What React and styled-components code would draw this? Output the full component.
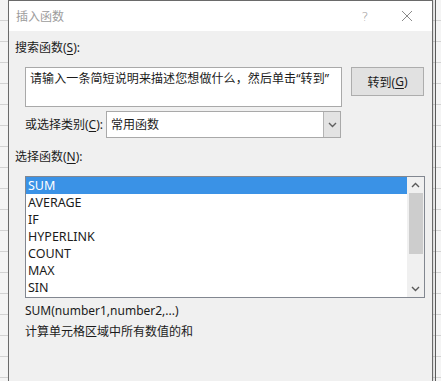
import React from 'react';
import styled, { createGlobalStyle } from 'styled-components';

const GlobalStyle = createGlobalStyle`
  html, body { margin: 0; padding: 0; }
  body {
    width: 441px;
    height: 381px;
    overflow: hidden;
    font-family: "Noto Sans", "Noto Sans CJK SC", sans-serif;
    background-color: #f4f4f4;
    background-image:
      linear-gradient(to right, transparent 435px, #5c5c5c 435px, #5c5c5c 436px, transparent 436px),
      repeating-linear-gradient(to bottom, transparent 0, transparent 20px, #d2d2d2 20px, #d2d2d2 21px);
  }
`;

const Dialog = styled.div`
  margin-left: 8px;
  width: 425px;
  height: 381px;
  box-sizing: border-box;
  border: 1px solid #6a6a6a;
  border-bottom: none;
  background: #f0f0f0;
  display: flex;
  flex-direction: column;
  box-shadow: 1px 0 2px rgba(0, 0, 0, 0.15);
  color: #1b1b1b;
  font-size: 12px;
`;

const TitleBar = styled.div`
  height: 30px;
  flex: none;
  background: #fff;
  display: flex;
  align-items: center;
  padding: 0 2px 0 7px;
`;

const Title = styled.div`
  flex: 1;
  color: #9c9c9c;
  font-size: 12px;
`;

const TitleButton = styled.div`
  width: ${p => p.$w}px;
  height: 30px;
  display: flex;
  align-items: center;
  justify-content: center;
  color: #9a9a9a;
  font-size: 13px;
  font-family: "DejaVu Sans", sans-serif;
  font-weight: 200;
  margin-left: ${p => p.$gap || 0}px;
`;

const Body = styled.div`
  padding: 9px 0 0 6px;
  display: flex;
  flex-direction: column;
`;

const Label = styled.div`
  line-height: 16px;
  height: 16px;
  margin-top: ${p => p.$top || 0}px;
  width: ${p => (p.$w ? `${p.$w}px` : 'auto')};
  flex: none;
  white-space: nowrap;
`;

const Key = styled.span`
  text-decoration: underline;
  text-underline-offset: 2px;
`;

const Indent = styled.div`
  padding-left: 10px;
  display: flex;
  flex-direction: column;
`;

const SearchRow = styled.div`
  display: flex;
  gap: 9px;
  margin-top: 11px;
  align-items: flex-start;
`;

const SearchBox = styled.div`
  width: 317px;
  height: 40px;
  box-sizing: border-box;
  background: #fff;
  border: 1px solid #a9a9a9;
  padding: 3px 4px;
  line-height: 16px;
  white-space: nowrap;
  letter-spacing: 0.1px;
`;

const Button = styled.div`
  width: 73px;
  height: 29px;
  box-sizing: border-box;
  background: #e1e1e1;
  border: 1px solid #adadad;
  display: flex;
  align-items: center;
  justify-content: center;
`;

const ComboRow = styled.div`
  display: flex;
  align-items: center;
  margin-top: 4px;
  height: 27px;
`;

const Combo = styled.div`
  width: 235px;
  height: 27px;
  box-sizing: border-box;
  background: #fff;
  border: 1px solid #a9a9a9;
  display: flex;
`;

const ComboText = styled.div`
  flex: 1;
  padding-left: 4px;
  line-height: 25px;
`;

const ComboArrow = styled.div`
  width: 16px;
  background: #e3e3e3;
  border-left: 1px solid #b4b4b4;
  display: flex;
  align-items: center;
  justify-content: center;
`;

const ListBox = styled.div`
  margin-top: 11px;
  width: 400px;
  height: 122px;
  box-sizing: border-box;
  border: 1px solid #828790;
  background: #fff;
  display: flex;
`;

const Items = styled.div`
  flex: 1;
  display: flex;
  flex-direction: column;
`;

const Item = styled.div`
  height: 17px;
  line-height: 17px;
  padding-left: 2px;
  font-size: 12.5px;
  background: ${p => (p.$selected ? '#3a92e6' : 'transparent')};
  color: ${p => (p.$selected ? '#fff' : '#1b1b1b')};
`;

const ScrollBar = styled.div`
  width: 17px;
  background: #f0f0f0;
  display: flex;
  flex-direction: column;
`;

const ScrollArrow = styled.div`
  height: 16px;
  flex: none;
  display: flex;
  align-items: center;
  justify-content: center;
`;

const Thumb = styled.div`
  height: 61px;
  margin: 0 1px 0 2px;
  background: #cdcdcd;
`;

const Spacer = styled.div`
  flex: 1;
`;

const Info = styled.div`
  line-height: 16px;
  margin-top: 5px;
`;

const Chevron = ({ up, color = '#5a5a5a' }) => (
  <svg width="9" height="6" viewBox="0 0 9 6">
    <polyline
      points={up ? '1,5 4.5,1.5 8,5' : '1,1 4.5,4.5 8,1'}
      fill="none"
      stroke={color}
      strokeWidth="1.4"
    />
  </svg>
);

const functions = ['SUM', 'AVERAGE', 'IF', 'HYPERLINK', 'COUNT', 'MAX', 'SIN'];

export default function App() {
  return (
    <>
      <GlobalStyle />
      <Dialog>
        <TitleBar>
          <Title>插入函数</Title>
          <TitleButton $w={30}>?</TitleButton>
          <TitleButton $w={46} $gap={4}>
            <svg width="12" height="12" viewBox="0 0 12 12">
              <path d="M1 1L11 11M11 1L1 11" stroke="#8a8a8a" strokeWidth="1" />
            </svg>
          </TitleButton>
        </TitleBar>
        <Body>
          <Label>搜索函数(<Key>S</Key>):</Label>
          <Indent>
            <SearchRow>
              <SearchBox>请输入一条简短说明来描述您想做什么，然后单击“转到”</SearchBox>
              <Button>转到(<Key>G</Key>)</Button>
            </SearchRow>
            <ComboRow>
              <Label $w={81}>或选择类别(<Key>C</Key>):</Label>
              <Combo>
                <ComboText>常用函数</ComboText>
                <ComboArrow>
                  <Chevron color="#606060" />
                </ComboArrow>
              </Combo>
            </ComboRow>
          </Indent>
          <Label $top={11}>选择函数(<Key>N</Key>):</Label>
          <Indent>
            <ListBox>
              <Items>
                {functions.map((f, i) => (
                  <Item key={f} $selected={i === 0}>{f}</Item>
                ))}
              </Items>
              <ScrollBar>
                <ScrollArrow>
                  <Chevron up />
                </ScrollArrow>
                <Thumb />
                <Spacer />
                <ScrollArrow>
                  <Chevron />
                </ScrollArrow>
              </ScrollBar>
            </ListBox>
            <Info>SUM(number1,number2,...)</Info>
            <Info>计算单元格区域中所有数值的和</Info>
          </Indent>
        </Body>
      </Dialog>
    </>
  );
}
